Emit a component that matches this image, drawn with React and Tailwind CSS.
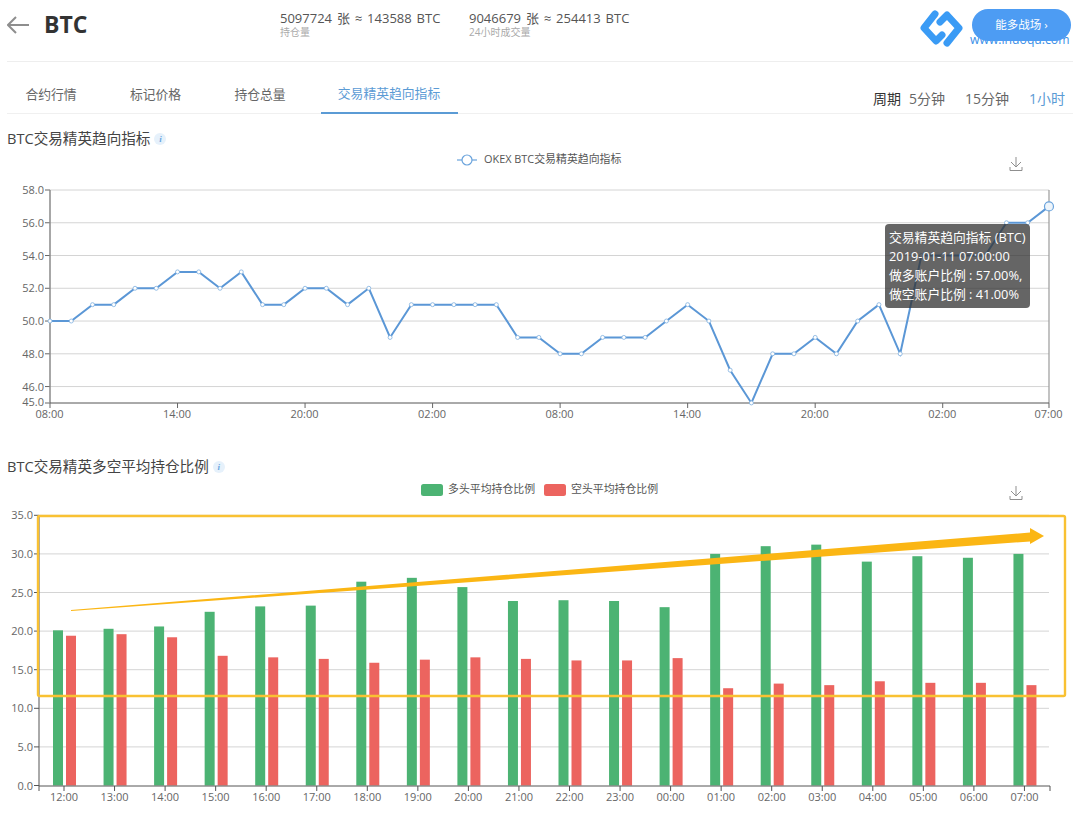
import React from "react";

const FONT = "'Open Sans','Noto Sans CJK SC',sans-serif";

const lineData = [50,50,51,51,52,52,53,53,52,53,51,51,52,52,51,52,49,51,51,51,51,51,49,49,48,48,49,49,49,50,51,50,47,45,48,48,49,48,50,51,48,54,54,54,54,56,56,57];
const lx = (i) => 50 + i * 21.255;
const ly = (v) => 190 + (58 - v) * 16.38;
const lineTicks = [["08:00",0],["14:00",6],["20:00",12],["02:00",18],["08:00",24],["14:00",30],["20:00",36],["02:00",42],["07:00",47]];

const green = [20.1,20.3,20.6,22.5,23.2,23.3,26.4,26.9,25.7,23.9,24,23.9,23.1,30,31,31.2,29,29.7,29.5,30];
const red = [19.4,19.6,19.2,16.8,16.6,16.4,15.9,16.3,16.6,16.4,16.2,16.2,16.5,12.6,13.2,13,13.5,13.3,13.3,13];
const hours = ["12:00","13:00","14:00","15:00","16:00","17:00","18:00","19:00","20:00","21:00","22:00","23:00","00:00","01:00","02:00","03:00","04:00","05:00","06:00","07:00"];
const by = (v) => 785.5 - v * 7.72;
const bc = (i) => 64 + i * 50.55;

function Info() {
  return (
    <span className="ml-[4px] inline-flex h-[12px] w-[12px] items-center justify-center rounded-full bg-[#e6f1fb] text-[9px] italic font-bold leading-none text-[#6aa5e0]" style={{ fontFamily: "'Liberation Serif',serif" }}>i</span>
  );
}

function Download({ x, y }) {
  return (
    <g transform={`translate(${x} ${y})`} fill="none" stroke="#8f8f8f" strokeWidth="1">
      <path d="M0 -7V3M-5 -2L0 3L5 -2M-6 3V6.5H6V3" />
    </g>
  );
}

function LineChart() {
  const pts = lineData.map((v, i) => `${lx(i)},${ly(v)}`).join(" ");
  return (
    <svg viewBox="0 150 1080 280" className="block h-[280px] w-[1080px]" style={{ fontFamily: FONT }}>
      <g fill="none">
        <path d="M457 160H477" stroke="#6aa3dc" strokeWidth="1.2" />
        <circle cx="467" cy="160" r="5" fill="#fff" stroke="#6aa3dc" strokeWidth="1.2" />
      </g>
      <text x="484" y="163" fontSize="10.9" fill="#555">OKEX BTC交易精英趋向指标</text>
      <Download x={1016} y={164} />
      {[58,56,54,52,50,48,46].map((v) => (
        <g key={v}>
          <path d={`M50 ${ly(v)}H1049`} stroke="#d4d4d4" strokeWidth="1" />
          <path d={`M45 ${ly(v)}H50`} stroke="#666" strokeWidth="1" />
          <text x="44" y={ly(v) + 4} textAnchor="end" fontSize="11" fill="#666">{v}.0</text>
        </g>
      ))}
      <text x="44" y="406" textAnchor="end" fontSize="11" fill="#666">45.0</text>
      <path d="M45 403H50" stroke="#666" />
      <path d="M50 190V403" stroke="#8a8a8a" strokeWidth="1.5" />
      <path d="M1049 190V403" stroke="#9a9a9a" strokeWidth="1.2" />
      <path d="M50 403H1049" stroke="#555" strokeWidth="1" />
      {lineTicks.map(([t, i], k) => (
        <g key={k}>
          <path d={`M${lx(i)} 403v5`} stroke="#666" />
          <text x={lx(i) - 0.5} y="418" textAnchor="middle" fontSize="11" fill="#666">{t}</text>
        </g>
      ))}
      <polyline points={pts} fill="none" stroke="#5b97d6" strokeWidth="2" />
      {lineData.map((v, i) =>
        i < 47 ? <circle key={i} cx={lx(i)} cy={ly(v)} r="2" fill="#fff" stroke="#7fb0e0" strokeWidth="0.8" /> : null
      )}
      <circle cx={lx(47)} cy={ly(57)} r="4.5" fill="#eef5fb" stroke="#6aa3dc" strokeWidth="1.2" />
    </svg>
  );
}

function BarChart() {
  return (
    <svg viewBox="0 478 1080 340" className="block h-[340px] w-[1080px]" style={{ fontFamily: FONT }}>
      <rect x="421" y="484" width="22" height="12" rx="2.5" fill="#4cb373" />
      <text x="448" y="493" fontSize="10.9" fill="#555">多头平均持仓比例</text>
      <rect x="544" y="484" width="22" height="12" rx="2.5" fill="#ec645f" />
      <text x="571" y="493" fontSize="10.9" fill="#555">空头平均持仓比例</text>
      <Download x={1016} y={493} />
      {[35,30,25,20,15,10,5,0].map((v) => (
        <g key={v}>
          {v > 0 && <path d={`M39 ${by(v)}H1049`} stroke="#d4d4d4" />}
          <path d={`M34 ${by(v)}H39`} stroke="#555" />
          <text x="33" y={by(v) + 4} textAnchor="end" fontSize="11" fill="#666">{v}.0</text>
        </g>
      ))}
      {green.map((g, i) => (
        <g key={i}>
          <rect x={bc(i) - 11} y={by(g)} width="10" height={785.5 - by(g)} fill="#4cb373" />
          <rect x={bc(i) + 2} y={by(red[i])} width="10" height={785.5 - by(red[i])} fill="#ec645f" />
          <path d={`M${bc(i)} 786v5`} stroke="#555" />
          <text x={bc(i)} y="801" textAnchor="middle" fontSize="11" fill="#666">{hours[i]}</text>
        </g>
      ))}
      <path d="M39 515V786H1050M39 786v5M1050 786v5" fill="none" stroke="#555" />
      <rect x="38" y="516" width="1027" height="180" rx="1.5" fill="none" stroke="#f9c132" strokeWidth="2.4" />
      <polygon points="71,610 1030,532.5 1030,528 1044,536 1030,544 1030,541.5 71,611" fill="#fbb614" />
    </svg>
  );
}

function Logo() {
  return (
    <svg viewBox="920 8 46 40" className="h-[40px] w-[46px] shrink-0" fill="none" stroke="#3a9bf5" strokeWidth="7" strokeLinecap="round" strokeLinejoin="round">
      <path d="M936 14L925 28L937 41L943 35" />
      <path d="M941 22L948 15L960 28L948 43" />
    </svg>
  );
}

export default function App() {
  return (
    <div className="relative h-[832px] w-[1080px] overflow-hidden bg-white" style={{ fontFamily: FONT }}>
      <header className="mx-[7px] flex h-[62px] items-start border-b border-[#eeeeee]">
        <svg viewBox="0 0 22 18" className="mt-[16px] h-[18px] w-[22px] shrink-0" fill="none" stroke="#8e8e8e" strokeWidth="2">
          <path d="M22 9H1M9 1L1 9L9 17" />
        </svg>
        <div className="ml-[15px] mt-[9px] w-[43px] text-[23px] font-bold leading-[30px] text-[#333]">BTC</div>
        <div className="ml-[193px] mt-[10px] w-[189px]">
          <div className="whitespace-nowrap text-[13px] leading-[16px] text-[#555] [word-spacing:1.5px]">5097724 张 ≈ 143588 BTC</div>
          <div className="text-[10px] leading-[13px] text-[#aaa]">持仓量</div>
        </div>
        <div className="mt-[10px]">
          <div className="whitespace-nowrap text-[13px] leading-[16px] text-[#555] [word-spacing:1.5px]">9046679 张 ≈ 254413 BTC</div>
          <div className="text-[10px] leading-[13px] text-[#aaa]">24小时成交量</div>
        </div>
        <div className="ml-auto mr-[3px] mt-[8px] flex">
          <Logo />
          <div className="relative ml-[5px] h-[40px] w-[100px]">
            <div className="absolute left-0 top-[24px] whitespace-nowrap text-[12.2px] leading-[16px] text-[#3a8fe8]">www.inuoqu.com</div>
            <div className="absolute left-[2px] top-[1px] flex h-[32px] w-[99px] items-center justify-center rounded-full bg-[#4d9cf3] text-[11.5px] text-white">能多战场 ›</div>
          </div>
        </div>
      </header>

      <nav className="mx-[7px] flex h-[52px] items-stretch border-b border-[#f0f0f0]">
        <div className="flex gap-[16.5px] text-[12.8px] text-[#666]">
          <div className="flex w-[88px] items-center justify-center pt-[14px]">合约行情</div>
          <div className="flex w-[88px] items-center justify-center pt-[14px]">标记价格</div>
          <div className="flex w-[88px] items-center justify-center pt-[14px]">持仓总量</div>
          <div className="-mb-px flex w-[137px] items-center justify-center border-b-2 border-[#5b9bd5] pt-[14px] text-[#5b9bd5]">交易精英趋向指标</div>
        </div>
        <div className="ml-auto mr-[8px] mt-[22px] flex items-center text-[14px] text-[#666]">
          <span className="mr-[8px] text-[#333]">周期</span>
          <span className="mr-[20px]">5分钟</span>
          <span className="mr-[20px]">15分钟</span>
          <span className="text-[#5b9bd5]">1小时</span>
        </div>
      </nav>

      <section className="relative">
        <h2 className="mx-[7px] mt-[14px] flex h-[22px] items-center text-[14.6px] font-normal text-[#444]">BTC交易精英趋向指标<Info /></h2>
        <LineChart />
        <div className="absolute left-[885px] top-[96px] flex h-[84px] w-[145px] flex-col justify-center rounded-[4px] bg-[#323232]/75 px-[4px] text-[12.8px] leading-[19px] text-white">
          <div className="whitespace-nowrap">交易精英趋向指标 (BTC)</div>
          <div className="whitespace-nowrap">2019-01-11 07:00:00</div>
          <div className="whitespace-nowrap">做多账户比例 : 57.00%,</div>
          <div className="whitespace-nowrap">做空账户比例 : 41.00%</div>
        </div>
      </section>

      <section>
        <h2 className="mx-[7px] mt-[26px] flex h-[22px] items-center text-[14.6px] font-normal text-[#444]">BTC交易精英多空平均持仓比例<Info /></h2>
        <BarChart />
      </section>
    </div>
  );
}
